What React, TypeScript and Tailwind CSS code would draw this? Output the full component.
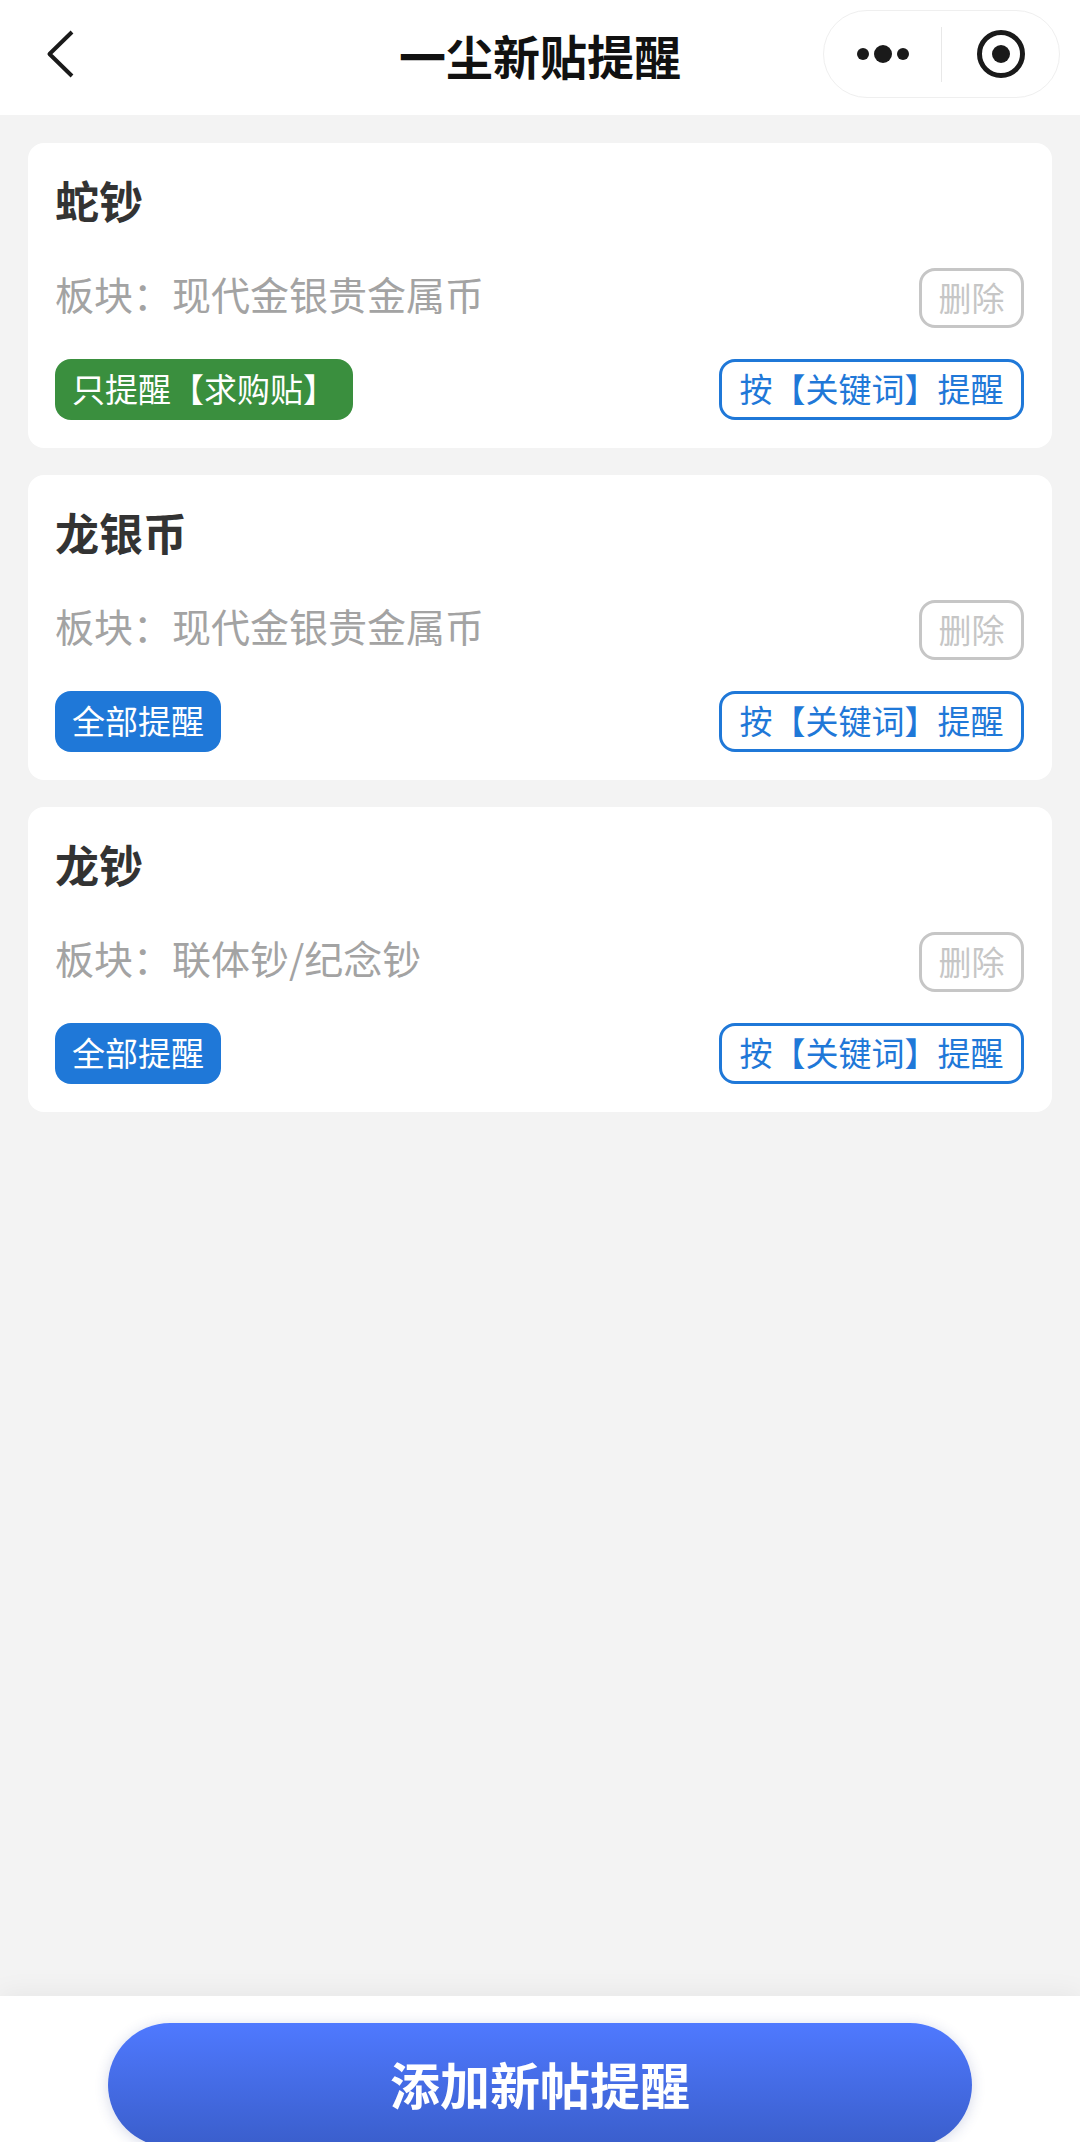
const cjk = "font-['Noto_Sans_CJK_SC','Noto_Sans',sans-serif]";

const items = [
  { name: "蛇钞", board: "现代金银贵金属币", tag: "只提醒【求购贴】", green: true },
  { name: "龙银币", board: "现代金银贵金属币", tag: "全部提醒", green: false },
  { name: "龙钞", board: "联体钞/纪念钞", tag: "全部提醒", green: false },
];

function Header() {
  return (
    <div className="relative flex h-[115px] shrink-0 items-center justify-center bg-white">
      <svg className="absolute left-[44px] top-[29px]" width="32" height="50" viewBox="0 0 32 50" fill="none">
        <path d="M28 3 L5.5 25 L28 47" stroke="#1a1a1a" strokeWidth="4" strokeLinejoin="round" />
      </svg>
      <div className="-mt-[7px] text-[47px] font-bold leading-none text-[#111]">一尘新贴提醒</div>
      <div className="absolute left-[823px] top-[10px] flex h-[88px] w-[237px] items-center rounded-[44px] border border-[#efefef] bg-white">
        <div className="flex w-[117px] items-center justify-center gap-[5px]">
          <span className="size-[12px] rounded-full bg-[#1a1a1a]" />
          <span className="size-[18px] rounded-full bg-[#1a1a1a]" />
          <span className="size-[12px] rounded-full bg-[#1a1a1a]" />
        </div>
        <div className="h-[55px] w-px bg-[#e8e8e8]" />
        <div className="flex flex-1 items-center justify-center">
          <svg width="48" height="48" viewBox="0 0 48 48" fill="none">
            <circle cx="24" cy="24" r="21.5" stroke="#1a1a1a" strokeWidth="5" />
            <circle cx="24" cy="24" r="9" fill="#1a1a1a" />
          </svg>
        </div>
      </div>
    </div>
  );
}

function Card({ name, board, tag, green }: (typeof items)[number]) {
  return (
    <div className="flex h-[305px] flex-col rounded-[16px] bg-white pb-[28px] pl-[27px] pr-[28px] pt-[30px]">
      <div className="text-[44px] font-bold leading-[54px] text-[#333]">{name}</div>
      <div className="mt-[41px] flex items-start justify-between">
        <div className="text-[39px] leading-[50px] text-[#a3a3a3]">
          {"板块\uFF1A"}
          {board}
        </div>
        <button className="flex h-[60px] w-[105px] items-center justify-center rounded-[16px] border-[3px] border-[#c6c6c6] pb-[2px] text-[33px] leading-none text-[#c6c6c6]">
          删除
        </button>
      </div>
      <div className="mt-auto flex items-center justify-between">
        <div
          className={
            green
              ? "flex h-[61px] items-center rounded-[16px] bg-[#3a8f3e] px-[17px] pb-[2px] text-[33px] leading-none text-white"
              : "flex h-[61px] items-center rounded-[16px] bg-[#1f78d8] px-[17px] pb-[2px] text-[33px] leading-none text-white"
          }
        >
          {tag}
        </div>
        <button className="flex h-[61px] w-[305px] items-center justify-center rounded-[16px] border-[3px] border-[#1f78d8] pb-[2px] text-[33px] leading-none text-[#1f78d8]">
          按【关键词】提醒
        </button>
      </div>
    </div>
  );
}

export default function App() {
  return (
    <div className={`flex h-[2142px] flex-col overflow-hidden bg-[#f3f3f3] ${cjk}`}>
      <Header />
      <div className="flex flex-1 flex-col gap-[27px] px-[28px] pt-[28px]">
        {items.map((item) => (
          <Card key={item.name} {...item} />
        ))}
      </div>
      <div className="h-[146px] shrink-0 bg-white px-[108px] pt-[27px] shadow-[0_-4px_24px_rgba(0,0,0,0.05)]">
        <button className="flex h-[124px] w-full items-center justify-center rounded-[62px] bg-gradient-to-b from-[#4f79ff] to-[#3a5ecb] pb-[5px] text-[50px] font-bold leading-none text-white shadow-[0_2px_14px_rgba(40,60,140,0.2)]">
          添加新帖提醒
        </button>
      </div>
    </div>
  );
}
